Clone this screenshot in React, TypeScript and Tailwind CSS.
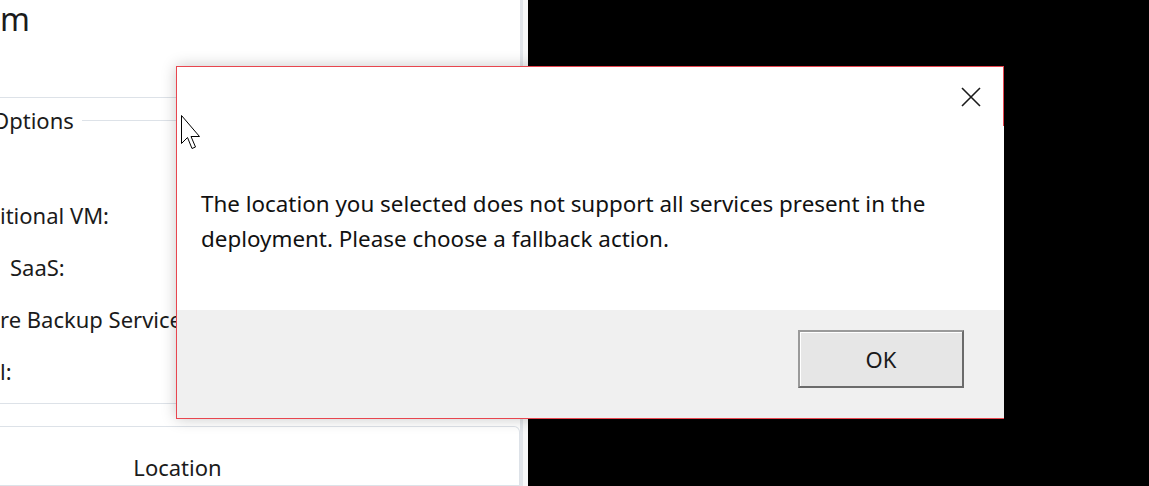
import React from 'react';

// Background form rows (partially hidden behind the dialog)
const rows = [
    { label: 'itional VM:', pad: 'pl-0' },
    { label: 'SaaS:', pad: 'pl-[10px]' },
    { label: 're Backup Service', pad: 'pl-0' },
    { label: 'l:', pad: 'pl-0' },
];

function Cursor() {
    return (
        <svg width="20" height="40" viewBox="0 0 20 40" className="absolute left-[181px] top-[115px]">
            <path
                d="M0.5 0.5 L0.5 28.5 L6.5 22.5 L11 33.5 L14.5 32 L10 21.5 L18.5 21.5 Z"
                fill="#fff"
                stroke="#000"
                strokeWidth="1"
                strokeLinejoin="miter"
            />
        </svg>
    );
}

function BackgroundForm() {
    return (
        <div className="w-[528px] h-full bg-white flex shrink-0 font-['Noto_Sans',sans-serif] text-[#1b1b1b]">
            <div className="flex-1 flex flex-col overflow-hidden">
                <div className="h-[98px] border-b border-[#dde2e8]">
                    <div className="text-[32px] leading-none pt-[3px]">m</div>
                </div>
                {/* group box legend */}
                <div className="flex items-center h-[44px] -ml-[8px]">
                    <span className="text-[22px] leading-none">Options</span>
                    <div className="flex-1 h-px bg-[#dde2e8] ml-[8px]" />
                </div>
                <div className="flex flex-col pt-[58px] gap-[22px]">
                    {rows.map((r) => (
                        <div key={r.label} className={`h-[30px] flex items-center text-[22px] ${r.pad}`}>
                            {r.label}
                        </div>
                    ))}
                </div>
                <div className="mt-[17px] h-[22px] border-t border-[#dde2e8]" />
                <div className="mt-[1px] flex-1 border border-[#dde2e8] border-l-0 rounded-tr-[6px] flex justify-center pt-[29px] pr-[164px]">
                    <span className="text-[22px] leading-none">Location</span>
                </div>
            </div>
            <div className="w-[3px] bg-[#e1e5ea]" />
            <div className="w-[5px] bg-[#f7f8f9]" />
        </div>
    );
}

function FallbackDialog() {
    return (
        <div className="absolute left-[176px] top-[66px] w-[828px] h-[353px] bg-white border border-r-0 border-[#e8464f] shadow-[0_0_14px_rgba(0,0,0,0.22)] flex flex-col font-['Noto_Sans',sans-serif]">
            <span className="absolute right-0 top-0 w-px h-[59px] bg-[#e8464f]" />
            <div className="flex justify-end pt-[20px] pr-[23px] h-[76px]">
                <svg width="20" height="20" viewBox="0 0 20 20">
                    <path d="M1 1 L19 19 M19 1 L1 19" stroke="#1a1a1a" strokeWidth="1.6" />
                </svg>
            </div>
            <div className="flex-1 px-[24px] pt-[43px] text-[22.4px] leading-[35px] text-[#111]">
                The location you selected does not support all services present in the
                <br />
                deployment. Please choose a fallback action.
            </div>
            <div className="h-[108px] bg-[#f0f0f0] flex justify-end items-start pt-[20px] pr-[40px]">
                <button className="w-[166px] h-[58px] bg-[#e6e6e6] border-2 border-t-[#9a9a9a] border-l-[#9a9a9a] border-r-[#6b6b6b] border-b-[#6b6b6b] shadow-[inset_1px_1px_0_#fff] text-[22px] text-[#1a1a1a]">
                    OK
                </button>
            </div>
        </div>
    );
}

export default function App() {
    return (
        <div className="relative w-[1149px] h-[486px] bg-black overflow-hidden flex">
            <BackgroundForm />
            <FallbackDialog />
            <Cursor />
        </div>
    );
}
